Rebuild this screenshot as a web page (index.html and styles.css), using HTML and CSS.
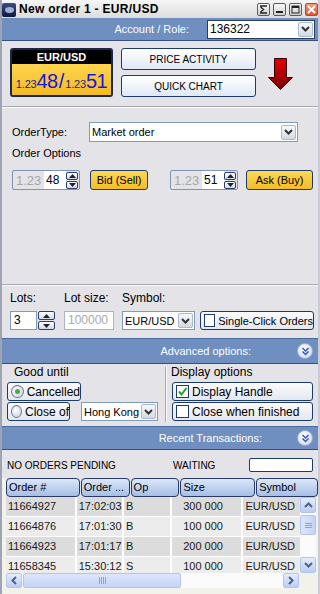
FILE: index.html
```html
<!DOCTYPE html>
<html lang="en">
<head>
    <meta charset="UTF-8">
    <title>New order 1 - EUR/USD</title>
    <link rel="stylesheet" href="styles.css">
</head>
<body>
<div class="window">
    <div class="titlebar">
        <span class="app-icon"><span class="app-blob"></span></span>
        <span class="title">New order 1 - EUR/USD</span>
        <div class="win-btns">
            <span class="wbtn"><svg width="9" height="9" viewBox="0 0 9 9"><path d="M1 1H8M1.5 2L4.5 4.5L1.5 7M1 8H8" fill="none" stroke="#222" stroke-width="1.4"/></svg></span>
            <span class="wbtn"><svg width="9" height="9" viewBox="0 0 9 9"><rect x="1" y="6" width="7" height="2" fill="#222"/></svg></span>
            <span class="wbtn"><svg width="9" height="9" viewBox="0 0 9 9"><rect x="1" y="1" width="7" height="7" fill="none" stroke="#222" stroke-width="1"/><rect x="1" y="1" width="7" height="2" fill="#222"/></svg></span>
            <span class="wbtn close"><svg width="9" height="9" viewBox="0 0 9 9"><path d="M1 1L8 8M8 1L1 8" stroke="#fff" stroke-width="2"/></svg></span>
        </div>
    </div>

    <div class="account-bar">
        <span class="account-label">Account / Role:</span>
        <div class="select account-select">
            <span class="select-text">136322</span>
            <span class="drop"><svg width="9" height="6" viewBox="0 0 9 6"><path d="M1 1L4.5 4.5L8 1" fill="none" stroke="#333" stroke-width="2"/></svg></span>
        </div>
    </div>

    <div class="top">
        <div class="price-box">
            <div class="price-head">EUR/USD</div>
            <div class="price-body">
                <span class="pip-small">1.23</span><span class="pip-big">48</span><span class="slash">/</span><span class="pip-small">1.23</span><span class="pip-big">51</span>
            </div>
        </div>
        <div class="top-btns">
            <div class="btn">PRICE ACTIVITY</div>
            <div class="btn">QUICK CHART</div>
        </div>
        <svg class="arrow" width="25" height="32" viewBox="0 0 25 32">
            <defs>
                <linearGradient id="red" x1="0" y1="0" x2="0" y2="1">
                    <stop offset="0" stop-color="#e80000"/>
                    <stop offset="1" stop-color="#7a0000"/>
                </linearGradient>
            </defs>
            <path d="M6.5 0.5H18.5V19.5H24.5L12.5 31.5L0.5 19.5H6.5Z" fill="url(#red)" stroke="#2a0000" stroke-width="1"/>
        </svg>
    </div>

    <div class="order">
        <div class="type-row">
            <span class="type-label">OrderType:</span>
            <div class="select type-select">
                <span class="select-text">Market order</span>
                <span class="drop"><svg width="9" height="6" viewBox="0 0 9 6"><path d="M1 1L4.5 4.5L8 1" fill="none" stroke="#333" stroke-width="2"/></svg></span>
            </div>
        </div>
        <div class="options-label">Order Options</div>
        <div class="spin-row">
            <div class="spin-group">
                <span class="prefix">1.23</span>
                <span class="spin-value">48</span>
                <div class="spin">
                    <span class="spin-btn"><svg width="7" height="4" viewBox="0 0 7 4"><path d="M0 4L3.5 0L7 4Z" fill="#222"/></svg></span>
                    <span class="spin-btn"><svg width="7" height="4" viewBox="0 0 7 4"><path d="M0 0L3.5 4L7 0Z" fill="#222"/></svg></span>
                </div>
            </div>
            <div class="ybtn bid">Bid (Sell)</div>
            <div class="spin-group second">
                <span class="prefix">1.23</span>
                <span class="spin-value">51</span>
                <div class="spin">
                    <span class="spin-btn"><svg width="7" height="4" viewBox="0 0 7 4"><path d="M0 4L3.5 0L7 4Z" fill="#222"/></svg></span>
                    <span class="spin-btn"><svg width="7" height="4" viewBox="0 0 7 4"><path d="M0 0L3.5 4L7 0Z" fill="#222"/></svg></span>
                </div>
            </div>
            <div class="ybtn ask">Ask (Buy)</div>
        </div>
    </div>

    <div class="lots">
        <div class="field">
            <span class="field-label">Lots:</span>
            <div class="field-row">
                <span class="input lots-input">3</span>
                <div class="spin big">
                    <span class="spin-btn"><svg width="7" height="4" viewBox="0 0 7 4"><path d="M0 4L3.5 0L7 4Z" fill="#222"/></svg></span>
                    <span class="spin-btn"><svg width="7" height="4" viewBox="0 0 7 4"><path d="M0 0L3.5 4L7 0Z" fill="#222"/></svg></span>
                </div>
            </div>
        </div>
        <div class="field size-field">
            <span class="field-label">Lot size:</span>
            <span class="input size-input">100000</span>
        </div>
        <div class="field symbol-field">
            <span class="field-label">Symbol:</span>
            <div class="select symbol-select">
                <span class="select-text">EUR/USD</span>
                <span class="drop"><svg width="9" height="6" viewBox="0 0 9 6"><path d="M1 1L4.5 4.5L8 1" fill="none" stroke="#333" stroke-width="2"/></svg></span>
            </div>
        </div>
        <div class="cbtn single">
            <span class="box"></span>
            <span>Single-Click Orders</span>
        </div>
    </div>

    <div class="bar adv-bar">
        <span class="bar-text">Advanced options:</span>
        <span class="bar-icon"><svg width="9" height="9" viewBox="0 0 9 9"><path d="M1.5 1L4.5 4L7.5 1M1.5 4.5L4.5 7.5L7.5 4.5" fill="none" stroke="#3358b0" stroke-width="1.5"/></svg></span>
    </div>

    <div class="adv">
        <div class="adv-left">
            <div class="group-label">Good until</div>
            <div class="cbtn cancelled">
                <span class="radio on"><span class="dot"></span></span>
                <span>Cancelled</span>
            </div>
            <div class="close-row">
                <div class="cbtn close-of">
                    <span class="radio"></span>
                    <span>Close of</span>
                </div>
                <div class="select city-select">
                    <span class="select-text">Hong Kong</span>
                    <span class="drop"><svg width="9" height="6" viewBox="0 0 9 6"><path d="M1 1L4.5 4.5L8 1" fill="none" stroke="#333" stroke-width="2"/></svg></span>
                </div>
            </div>
        </div>
        <div class="divider"></div>
        <div class="adv-right">
            <div class="group-label">Display options</div>
            <div class="cbtn wide">
                <span class="box"><svg width="11" height="11" viewBox="0 0 11 11"><path d="M2 5.5L4.5 8.5L9.5 2" fill="none" stroke="#21a121" stroke-width="2"/></svg></span>
                <span>Display Handle</span>
            </div>
            <div class="cbtn wide">
                <span class="box"></span>
                <span>Close when finished</span>
            </div>
        </div>
    </div>

    <div class="bar recent-bar">
        <span class="bar-text">Recent Transactions:</span>
        <span class="bar-icon"><svg width="9" height="9" viewBox="0 0 9 9"><path d="M1.5 1L4.5 4L7.5 1M1.5 4.5L4.5 7.5L7.5 4.5" fill="none" stroke="#3358b0" stroke-width="1.5"/></svg></span>
    </div>

    <div class="status">
        <span class="pending">NO ORDERS PENDING</span>
        <span class="waiting">WAITING</span>
        <span class="wait-box"></span>
    </div>

    <div class="grid">
        <div class="grid-head">
            <span class="hcell c1">Order #</span>
            <span class="hcell c2">Order ...</span>
            <span class="hcell c3">Op</span>
            <span class="hcell c4">Size</span>
            <span class="hcell c5">Symbol</span>
        </div>
        <div class="grid-body">
            <div class="rows">
                <div class="row dark"><span class="cell c1">11664927</span><span class="cell c2">17:02:03</span><span class="cell c3">B</span><span class="cell c4">300 000</span><span class="cell c5">EUR/USD</span></div>
                <div class="row"><span class="cell c1">11664876</span><span class="cell c2">17:01:30</span><span class="cell c3">B</span><span class="cell c4">100 000</span><span class="cell c5">EUR/USD</span></div>
                <div class="row dark"><span class="cell c1">11664923</span><span class="cell c2">17:01:17</span><span class="cell c3">B</span><span class="cell c4">200 000</span><span class="cell c5">EUR/USD</span></div>
                <div class="row"><span class="cell c1">11658345</span><span class="cell c2">15:30:12</span><span class="cell c3">S</span><span class="cell c4">100 000</span><span class="cell c5">EUR/USD</span></div>
            </div>
            <div class="vscroll">
                <span class="sbtn"><svg width="9" height="6" viewBox="0 0 9 6"><path d="M1 5L4.5 1.5L8 5" fill="none" stroke="#4d6185" stroke-width="2"/></svg></span>
                <span class="vthumb"><svg width="7" height="7" viewBox="0 0 7 7"><path d="M0 1.5H7M0 3.5H7M0 5.5H7" stroke="#8ea4d8" stroke-width="1"/></svg></span>
                <span class="vtrack"></span>
                <span class="sbtn"><svg width="9" height="6" viewBox="0 0 9 6"><path d="M1 1L4.5 4.5L8 1" fill="none" stroke="#4d6185" stroke-width="2"/></svg></span>
            </div>
        </div>
        <div class="hscroll">
            <span class="sbtn"><svg width="6" height="9" viewBox="0 0 6 9"><path d="M5 1L1.5 4.5L5 8" fill="none" stroke="#4d6185" stroke-width="2"/></svg></span>
            <span class="hthumb"><svg width="9" height="7" viewBox="0 0 9 7"><path d="M1.5 0V7M3.5 0V7M5.5 0V7M7.5 0V7" stroke="#8ea4d8" stroke-width="1"/></svg></span>
            <span class="htrack"></span>
            <span class="sbtn"><svg width="6" height="9" viewBox="0 0 6 9"><path d="M1 1L4.5 4.5L1 8" fill="none" stroke="#4d6185" stroke-width="2"/></svg></span>
        </div>
    </div>
</div>
</body>
</html>
```

FILE: styles.css
```css
*{
    margin:0;
    padding:0;
    box-sizing:border-box;
}
body{
    font-family:"Liberation Sans",Arial,sans-serif;
    font-size:11px;
    color:#000;
    background:#e3e3e8;
}
.window{
    width:320px;
    height:594px;
    display:flex;
    flex-direction:column;
    background:#e3e3e8;
    border-left:2px solid #9ea4b4;
    border-right:2px solid #c9ccd6;
    overflow:hidden;
}

/* title bar */
.titlebar{
    height:18px;
    display:flex;
    align-items:center;
    background:linear-gradient(#f6f6f6,#dcdcdc);
}
.app-icon{
    width:14px;
    height:14px;
    margin:1px 3px 0 0;
    border-radius:2px;
    background:linear-gradient(#3b4f86,#0d1838);
    display:flex;
    align-items:center;
    justify-content:center;
}
.app-blob{
    width:9px;
    height:6px;
    border-radius:50%;
    background:#9cb0d4;
}
.title{
    font-weight:bold;
    font-size:12px;
    letter-spacing:0.3px;
}
.win-btns{
    margin-left:auto;
    display:flex;
    gap:3px;
}
.wbtn{
    width:13px;
    height:13px;
    border:1px solid #5a5a5a;
    border-radius:2px;
    background:linear-gradient(#fafafa,#d0d0d0);
    display:flex;
    align-items:center;
    justify-content:center;
}
.wbtn.close{
    background:linear-gradient(#f49a80,#e5532c);
    border-color:#b04a30;
}

/* blue header bars */
.account-bar{
    height:23px;
    display:flex;
    align-items:center;
    justify-content:flex-end;
    padding-right:3px;
    background:#6f8fc0;
    border-bottom:1px solid #33507e;
}
.account-label{
    color:#fff;
    margin-right:18px;
}
.select{
    display:flex;
    align-items:center;
    background:#fff;
    border:1px solid #7f9db9;
    padding-left:2px;
}
.select-text{
    flex:1;
    white-space:nowrap;
    overflow:hidden;
}
.drop{
    width:15px;
    height:15px;
    margin-right:1px;
    border:1px solid #a9b8d6;
    border-radius:2px;
    background:linear-gradient(#f7f8fb,#d3d9e5);
    display:flex;
    align-items:center;
    justify-content:center;
}
.account-select{
    width:108px;
    height:19px;
    font-size:12px;
    border-color:#2c3c5c;
}

/* price box */
.top{
    height:66px;
    display:flex;
    align-items:flex-start;
    padding:7px 0 0 8px;
    border-bottom:1px solid #a8a8ae;
    box-shadow:0 1px 0 #fafafa;
}
.price-box{
    width:103px;
    height:49px;
    border:2px solid #1a2848;
    border-radius:3px;
    overflow:hidden;
    display:flex;
    flex-direction:column;
}
.price-head{
    height:14px;
    background:#000;
    color:#fff;
    font-weight:bold;
    font-size:11px;
    line-height:14px;
    text-align:center;
}
.price-body{
    flex:1;
    background:linear-gradient(#fdd54e,#f3bb22);
    display:flex;
    align-items:baseline;
    justify-content:center;
    padding-top:6px;
}
.pip-small{
    font-size:11px;
    color:#1c1c88;
    letter-spacing:-0.2px;
}
.pip-big{
    font-size:20px;
    color:#1616e0;
    letter-spacing:-0.5px;
}
.slash{
    font-size:20px;
    color:#1616e0;
    margin:0 1px;
}
.top-btns{
    width:135px;
    margin-left:8px;
    display:flex;
    flex-direction:column;
    gap:5px;
}
.btn{
    height:22px;
    border:1px solid #1c3a6a;
    border-radius:3px;
    background:linear-gradient(#ffffff,#e0e8f6);
    display:flex;
    align-items:center;
    justify-content:center;
    font-size:10px;
}
.arrow{
    margin:10px 0 0 12px;
}

/* order type */
.order{
    height:178px;
    padding:15px 0 0 10px;
    border-bottom:1px solid #a8a8ae;
    box-shadow:0 1px 0 #fafafa;
}
.type-row{
    display:flex;
    align-items:center;
    height:20px;
}
.type-label{
    width:77px;
}
.type-select{
    width:209px;
    height:20px;
}
.options-label{
    margin-top:4px;
    line-height:14px;
}
.spin-row{
    margin-top:10px;
    display:flex;
    align-items:center;
}
.spin-group{
    width:68px;
    height:20px;
    border:1px solid #7f93b4;
    border-radius:2px;
    display:flex;
    align-items:center;
    padding-left:3px;
}
.spin-group.second{
    margin-left:22px;
}
.prefix{
    font-size:13px;
    color:#a6a6aa;
    width:28px;
}
.spin-value{
    width:22px;
    height:18px;
    background:#fff;
    font-size:12px;
    line-height:18px;
    padding-left:2px;
}
.spin{
    display:flex;
    flex-direction:column;
    gap:1px;
}
.spin-btn{
    width:12px;
    height:8px;
    border:1px solid #2b3f6b;
    border-radius:2px;
    background:linear-gradient(#ffffff,#cfd8ea);
    display:flex;
    align-items:center;
    justify-content:center;
}
.spin.big .spin-btn{
    width:17px;
    height:9px;
}
.ybtn{
    height:20px;
    border:1px solid #1c3a6a;
    border-radius:3px;
    background:linear-gradient(#fdd858,#f4bd26);
    display:flex;
    align-items:center;
    justify-content:center;
}
.bid{
    width:58px;
    margin-left:10px;
}
.ask{
    width:67px;
    margin-left:8px;
}

/* lots row */
.lots{
    height:53px;
    display:flex;
    align-items:flex-end;
    padding:0 0 8px 8px;
}
.field{
    display:flex;
    flex-direction:column;
    gap:7px;
}
.field-label{
    line-height:12px;
    font-size:12px;
}
.field-row{
    display:flex;
    align-items:center;
    gap:1px;
}
.input{
    height:19px;
    border:1px solid #7f9db9;
    background:#fff;
    padding-left:3px;
    line-height:17px;
    font-size:12px;
}
.lots-input{
    width:27px;
}
.size-field{
    margin-left:9px;
}
.size-input{
    width:50px;
    color:#a8a8a8;
    border-color:#a8b4c8;
}
.symbol-field{
    margin-left:8px;
}
.symbol-select{
    width:73px;
    height:19px;
    font-size:11px;
}
.cbtn{
    height:19px;
    border:1px solid #1c3a6a;
    border-radius:3px;
    background:linear-gradient(#fbfbfc,#e4e7ee);
    display:flex;
    align-items:center;
    padding-left:3px;
    gap:3px;
    font-size:12px;
    white-space:nowrap;
}
.single{
    width:114px;
    margin-left:5px;
    font-size:11px;
}
.box{
    width:13px;
    height:13px;
    border:1px solid #1c3a6a;
    background:#fff;
    display:flex;
    align-items:center;
    justify-content:center;
}
.radio{
    width:13px;
    height:13px;
    border:1px solid #6a7898;
    border-radius:50%;
    background:radial-gradient(circle at 40% 40%,#ffffff,#c8ccd6);
    display:flex;
    align-items:center;
    justify-content:center;
}
.dot{
    width:5px;
    height:5px;
    border-radius:50%;
    background:#3fb03f;
}

/* section bars */
.bar{
    display:flex;
    align-items:center;
    justify-content:flex-end;
    padding-right:5px;
    background:#6f8fc0;
    border-top:1px solid #4b6a9c;
    border-bottom:1px solid #33507e;
    color:#fff;
}
.adv-bar{
    height:26px;
}
.adv-bar .bar-text{
    margin-right:46px;
}
.recent-bar{
    height:24px;
}
.recent-bar .bar-text{
    margin-right:35px;
}
.bar-icon{
    width:16px;
    height:16px;
    border-radius:50%;
    border:1px solid #9fb0d4;
    background:radial-gradient(circle at 40% 35%,#ffffff,#c6d3ee);
    display:flex;
    align-items:center;
    justify-content:center;
}

/* advanced options */
.adv{
    height:62px;
    display:flex;
}
.adv-left{
    width:163px;
    padding-left:5px;
}
.group-label{
    height:18px;
    line-height:16px;
    padding-left:7px;
    font-size:12px;
}
.adv-right .group-label{
    padding-left:0;
}
.cancelled{
    width:74px;
}
.close-row{
    margin-top:1px;
    display:flex;
    align-items:center;
}
.close-of{
    width:63px;
}
.city-select{
    width:77px;
    height:19px;
    margin-left:11px;
    font-size:11px;
}
.divider{
    width:2px;
    height:55px;
    margin-top:3px;
    border-left:1px solid #a8a8ae;
    border-right:1px solid #fafafa;
}
.adv-right{
    padding-left:4px;
    display:flex;
    flex-direction:column;
}
.cbtn.wide{
    width:141px;
    margin-left:1px;
}
.cbtn.wide + .cbtn.wide{
    margin-top:1px;
}

/* status */
.status{
    height:28px;
    display:flex;
    align-items:center;
    padding:2px 5px 0 5px;
}
.pending{
    width:166px;
    font-size:10px;
}
.waiting{
    font-size:10px;
}
.wait-box{
    margin-left:auto;
    width:64px;
    height:14px;
    background:#fff;
    border:1px solid #1c3a6a;
    border-radius:2px;
}

/* transactions grid */
.grid{
    flex:1;
    padding-left:4px;
    background:#f2f1ea;
    display:flex;
    flex-direction:column;
}
.grid-head{
    height:19px;
    display:flex;
    gap:1px;
    background:#e3e3e8;
}
.hcell{
    height:19px;
    border:1px solid #26396a;
    border-radius:4px;
    background:linear-gradient(#dce7f8,#a6bee6);
    padding-left:2px;
    line-height:17px;
    white-space:nowrap;
    overflow:hidden;
    font-size:11px;
}
.hcell.c1{width:74px;}
.hcell.c2{width:49px;}
.hcell.c3{width:49px;}
.hcell.c4{width:75px;}
.hcell.c5{width:62px;}
.grid-body{
    height:76px;
    display:flex;
}
.rows{
    width:294px;
    overflow:hidden;
    background:#fff;
}
.row{
    height:20px;
    display:flex;
    background:#ececec;
    border-bottom:1px solid #fff;
    font-size:11px;
    color:#1a1a1a;
}
.row.dark{
    background:#dcdcdc;
}
.cell{
    line-height:19px;
    border-right:2px solid #fff;
    white-space:nowrap;
    overflow:hidden;
    padding-left:2px;
}
.cell.c1{width:75px;}
.cell.c2{width:50px;}
.cell.c3{width:51px;}
.cell.c4{width:75px;padding-left:11px;}
.cell.c5{width:60px;border-right:0;}
.vscroll{
    width:16px;
    display:flex;
    flex-direction:column;
    background:#fbfbfb;
}
.sbtn{
    width:16px;
    height:16px;
    border:1px solid #b4c4ea;
    border-radius:2px;
    background:linear-gradient(#e4ecfd,#bccdf4);
    display:flex;
    align-items:center;
    justify-content:center;
}
.vthumb{
    height:20px;
    margin-top:2px;
    border:1px solid #b4c4ea;
    border-radius:2px;
    background:linear-gradient(90deg,#dce6fd,#c4d3f6);
    display:flex;
    align-items:center;
    justify-content:center;
}
.vtrack{
    flex:1;
}
.hscroll{
    width:293px;
    height:15px;
    display:flex;
    background:#fbfbfb;
}
.hscroll .sbtn{
    height:15px;
}
.hthumb{
    width:158px;
    margin-left:1px;
    border:1px solid #b4c4ea;
    border-radius:2px;
    background:linear-gradient(#dce6fd,#c4d3f6);
    display:flex;
    align-items:center;
    justify-content:center;
}
.htrack{
    flex:1;
}
```
